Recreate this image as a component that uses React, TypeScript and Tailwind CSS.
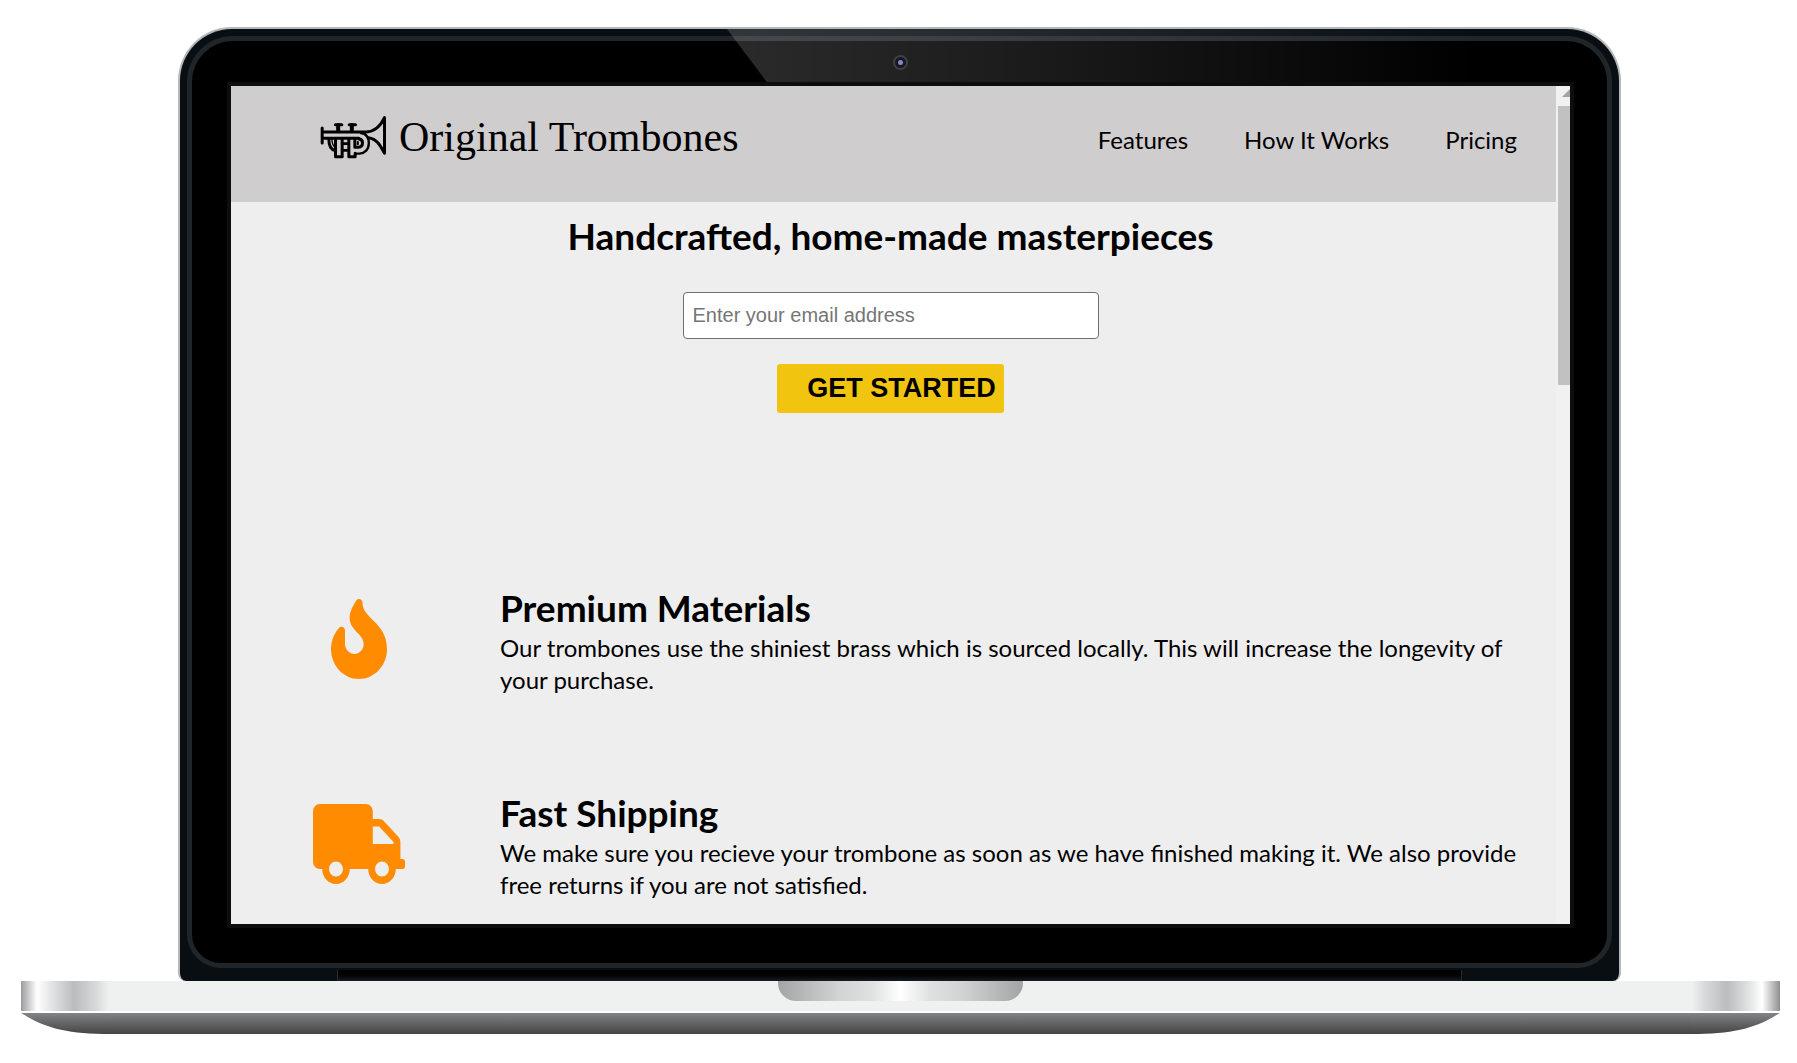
import React from "react";

function TrumpetIcon() {
  return (
    <svg viewBox="60 45 200 132" className="h-11 w-[67px] shrink-0" fill="none" stroke="#000" strokeWidth="9" strokeLinecap="round" strokeLinejoin="round" aria-hidden="true">
      <path d="M66 84v45" strokeWidth="9" />
      <path d="M68 96H198C230 95 245 70 253 53V160C242 140 232 117 205 113" />
      <path d="M68 115H176" />
      <path d="M182 99C200 101 206 113 206 130C206 148 194 160 178 161H166" strokeWidth="7" />
      <path d="M114 75V94M155 75V94" strokeWidth="12" />
      <path d="M106 74H125M147 74H166" strokeWidth="9" />
      <path d="M86 117C86 138 92 150 106 152" />
      <path d="M95 117C96 132 99 140 106 142" strokeWidth="4" />
      <path d="M106 117V170H126V117M146 117V170H165V160" />
      <path d="M126 131H146M126 151H146" strokeWidth="8" />
      <path d="M164 117V142H172C182 142 187 136 187 129C187 122 183 117 176 117" />
      <path d="M173 126V133" strokeWidth="6" />
    </svg>
  );
}

function FlameIcon() {
  return (
    <svg viewBox="0 0 384 512" preserveAspectRatio="none" className="h-20 w-14" fill="#ff8c00" aria-hidden="true">
      <path d="M216 23.86c0-23.8-30.65-32.77-44.15-13.04C48 191.85 224 200 224 288c0 35.63-29.11 64.46-64.85 63.99-35.17-.45-63.15-29.77-63.15-64.94v-85.51c0-21.7-26.47-32.23-41.43-16.5C27.8 213.16 0 261.33 0 320c0 105.87 86.13 192 192 192s192-86.13 192-192c0-170.29-168-193-168-296.14z" />
    </svg>
  );
}

function TruckIcon() {
  return (
    <svg viewBox="0 0 640 512" preserveAspectRatio="none" className="h-20 w-[92px]" fill="#ff8c00" aria-hidden="true">
      <path d="M624 352h-16V243.9c0-12.7-5.1-24.9-14.1-33.9L494 110.1c-9-9-21.2-14.1-33.9-14.1H416V48c0-26.5-21.5-48-48-48H48C21.5 0 0 21.5 0 48v320c0 26.5 21.5 48 48 48h16c0 53 43 96 96 96s96-43 96-96h128c0 53 43 96 96 96s96-43 96-96h48c8.8 0 16-7.2 16-16v-32c0-8.8-7.2-16-16-16zM160 464c-26.5 0-48-21.5-48-48s21.5-48 48-48 48 21.5 48 48-21.5 48-48 48zm320 0c-26.5 0-48-21.5-48-48s21.5-48 48-48 48 21.5 48 48-21.5 48-48 48zm80-208H416V144h44.1l99.9 99.9V256z" />
    </svg>
  );
}

const links = ["Features", "How It Works", "Pricing"];

const features = [
  {
    title: "Premium Materials",
    text: "Our trombones use the shiniest brass which is sourced locally. This will increase the longevity of your purchase.",
    icon: <FlameIcon />,
  },
  {
    title: "Fast Shipping",
    text: "We make sure you recieve your trombone as soon as we have finished making it. We also provide free returns if you are not satisfied.",
    icon: <TruckIcon />,
  },
];

function Site() {
  return (
    <div className="flex-1 bg-[#eeeeee] pb-[23px] font-['Lato',sans-serif] text-black">
      <header className="flex h-[116px] items-start justify-between bg-[#d0cdce] pr-[39px] pl-[89px]">
        <a href="#" className="flex items-center gap-3 pt-6">
          <TrumpetIcon />
          <h1 className="font-['Liberation_Serif',serif] text-[42px] leading-[54px]">Original Trombones</h1>
        </a>
        <nav className="flex gap-14 pt-[38px] text-2xl leading-8">
          {links.map((label) => (
            <a key={label} href="#">{label}</a>
          ))}
        </nav>
      </header>
      <main>
        <section className="flex flex-col items-center pt-[10px] pr-[6px]">
          <h2 className="text-[37px] leading-[48px] font-bold">Handcrafted, home-made masterpieces</h2>
          <form className="flex flex-col items-center gap-[25px] pt-8" onSubmit={(e) => e.preventDefault()}>
            <input
              type="email"
              aria-label="Email address"
              placeholder="Enter your email address"
              className="h-[47px] w-[416px] rounded-sm border border-[#6f6f6f] bg-white px-[9px] font-['Liberation_Sans',sans-serif] text-xl placeholder:text-[#757575]"
            />
            <button type="submit" className="h-[49px] rounded-[3px] bg-[#f1c40f] pr-2 pl-[30px] font-['Liberation_Sans',sans-serif] text-[27px] font-black">
              GET STARTED
            </button>
          </form>
        </section>
        <section className="flex flex-col gap-[93px] pt-[171px] pr-8 pl-[74px]">
          {features.map((f) => (
            <article key={f.title} className="flex items-start">
              <div className="flex w-[108px] shrink-0 justify-center pt-[15px]">{f.icon}</div>
              <div className="pl-[87px]">
                <h2 className="text-[37px] leading-[48px] font-bold">{f.title}</h2>
                <p className="text-2xl leading-8">{f.text}</p>
              </div>
            </article>
          ))}
        </section>
      </main>
    </div>
  );
}

function ScrollTrack() {
  return (
    <div className="w-[14px] shrink-0 overflow-hidden bg-[#f1f1f1] pl-[2px]">
      <svg viewBox="0 0 12 20" className="h-5 w-3" aria-hidden="true">
        <path d="M4 11L12 3V11z" fill="#a3a3a3" />
      </svg>
      <div className="h-[279px] bg-[#c1c1c1]" />
    </div>
  );
}

function Base() {
  return (
    <div>
      <div className="flex h-8 justify-center border-b-2 border-white bg-[#eff1f1]">
        <div className="w-[90px] bg-[linear-gradient(90deg,#9c9c9f_0px,#ffffff_16px,#e0e1e2_32px,#bbbcbe_53px,#d9dadc_76px,#eff1f1_88px)]" />
        <div className="flex flex-1 justify-center">
          <div className="h-5 w-[245px] rounded-b-[18px] bg-[linear-gradient(90deg,#a3a4a6,#d2d3d4_25%,#dfe0e0_38%,#ffffff_50%,#dfe0e0_62%,#d2d3d4_75%,#a3a4a6)]" />
        </div>
        <div className="w-[90px] bg-[linear-gradient(270deg,#8f8f91_0px,#ffffff_18px,#e0e1e2_32px,#bbbcbe_53px,#d9dadc_76px,#eff1f1_88px)]" />
      </div>
      <div className="flex h-[21px]">
        <svg viewBox="0 0 90 21" className="h-[21px] w-[90px]" aria-hidden="true">
          <defs>
            <linearGradient id="lip" x1="0" y1="0" x2="0" y2="1">
              <stop offset="0" stopColor="#828486" />
              <stop offset="1" stopColor="#454345" />
            </linearGradient>
          </defs>
          <path d="M0 0H90V21C45 21 24 15 0 0z" fill="url(#lip)" />
        </svg>
        <div className="flex-1 bg-gradient-to-b from-[#828486] to-[#454345]" />
        <svg viewBox="0 0 90 21" className="h-[21px] w-[90px]" aria-hidden="true">
          <path d="M90 0H0V21C45 21 66 15 90 0z" fill="url(#lip)" />
        </svg>
      </div>
    </div>
  );
}

export default function App() {
  return (
    <div className="min-h-screen bg-white pt-[27px] pr-[17px] pb-[28px] pl-[21px]">
      <div className="mr-[159px] ml-[157px] rounded-t-[54px] rounded-b-lg border-2 border-b-0 border-[#b4b8ba] bg-[#090e12] px-[7px] pt-[7px]">
        <div className="relative rounded-t-[46px] rounded-b-[34px] border-[5px] border-[#202529] bg-black pt-[41px] pr-[33px] pb-[35px] pl-[35px]">
          <div className="absolute -inset-x-3 -top-3 h-[60px] rounded-t-[52px] bg-[linear-gradient(90deg,#ffffff2b_38%,#ffffff1c_58%,#ffffff00_90%)] [clip-path:polygon(547px_0,100%_0,100%_100%,592px_100%)]" />
          <div className="absolute top-[14px] left-[701px] flex size-[15px] items-center justify-center rounded-full border-2 border-[#404145] bg-[#171720]">
            <div className="size-[5px] rounded-full bg-[#8488c8]" />
          </div>
          <div className="relative flex border-[4px] border-[#0d0d0d]">
            <Site />
            <ScrollTrack />
          </div>
        </div>
        <div className="mx-[150px] mt-[2px] h-[11px] border-x border-[#252a2d] bg-gradient-to-b from-black to-[#171c20]" />
      </div>
      <Base />
    </div>
  );
}
